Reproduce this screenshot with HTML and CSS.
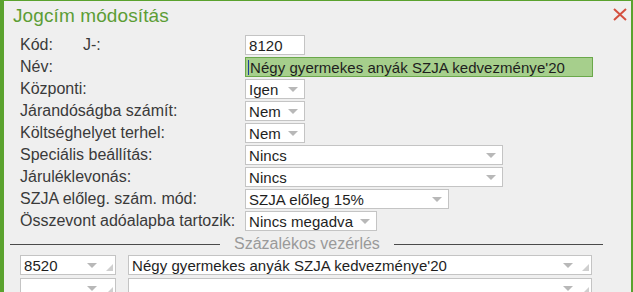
FILE: index.html
```html
<!DOCTYPE html>
<html lang="hu">
<head>
    <meta charset="UTF-8">
    <title>Jogcím módosítás</title>
    <link rel="stylesheet" href="styles.css">
</head>
<body>
    <div class="dialog">
        <div class="dialog-head">
            <h1>Jogcím módosítás</h1>
            <svg class="close" width="14" height="13" viewBox="0 0 14 13">
                <path d="M1 1 L13 12 M13 1 L1 12" stroke="#d4503f" stroke-width="2" fill="none"/>
            </svg>
        </div>

        <div class="form">
            <div class="label"><span class="kod">Kód:</span><span>J-:</span></div>
            <div class="field w60">8120</div>

            <div class="label">Név:</div>
            <div class="field name w348"><span class="caret"></span>Négy gyermekes anyák SZJA kedvezménye'20</div>

            <div class="label">Központi:</div>
            <div class="field select w60">Igen</div>

            <div class="label">Járandóságba számít:</div>
            <div class="field select w60">Nem</div>

            <div class="label">Költséghelyet terhel:</div>
            <div class="field select w60">Nem</div>

            <div class="label">Speciális beállítás:</div>
            <div class="field select w258">Nincs</div>

            <div class="label">Járuléklevonás:</div>
            <div class="field select w258">Nincs</div>

            <div class="label">SZJA előleg. szám. mód:</div>
            <div class="field select w204">SZJA előleg 15%</div>

            <div class="label">Összevont adóalapba tartozik:</div>
            <div class="field select w132">Nincs megadva</div>
        </div>

        <div class="divider">Százalékos vezérlés</div>

        <div class="rule-rows">
            <div class="field select grip">8520</div>
            <div class="field select grip">Négy gyermekes anyák SZJA kedvezménye'20</div>
            <div class="field select grip"></div>
            <div class="field select grip"></div>
        </div>
    </div>
</body>
</html>
```

FILE: styles.css
```css
html, body {
    margin: 0;
    height: 100%;
    overflow: hidden;
}

body {
    font-family: "Liberation Sans", Arial, sans-serif;
    background: #efefef;
}

.dialog {
    height: 292px;
    box-sizing: border-box;
    border-left: 4px solid #5aa22e;
    border-top: 1px solid #5aa22e;
    border-right: 2px solid #5aa22e;
    background: #efefef;
}

.dialog-head {
    display: flex;
    justify-content: space-between;
    align-items: flex-start;
    height: 34px;
    padding: 0 4px 0 9px;
}

h1 {
    margin: 4px 0 0;
    font-size: 19px;
    font-weight: normal;
    color: #5c9d35;
    letter-spacing: 0.1px;
}

.close {
    margin-top: 7px;
}

.form {
    display: grid;
    grid-template-columns: 225px 1fr;
    grid-auto-rows: 20px;
    row-gap: 2px;
    padding-left: 16px;
}

.label {
    display: flex;
    align-items: center;
    font-size: 16px;
    color: #3a3a3a;
}

.kod {
    width: 63px;
}

.field {
    position: relative;
    display: flex;
    align-items: center;
    box-sizing: border-box;
    height: 20px;
    padding-left: 3px;
    border: 1px solid #c4c4c4;
    background: #fff;
    font-size: 15px;
    letter-spacing: 0.05px;
    color: #1e1e1e;
    white-space: nowrap;
}

.select::after {
    content: "";
    position: absolute;
    right: 6px;
    top: 7px;
    border-left: 5px solid transparent;
    border-right: 5px solid transparent;
    border-top: 5px solid #b8b8b8;
}

.w60 { width: 60px; }
.w132 { width: 132px; }
.w204 { width: 204px; }
.w258 { width: 258px; }
.w348 { width: 348px; }

.name {
    background: #a6cf8c;
    border-color: #6aa84a;
    padding-left: 2px;
}

.caret {
    width: 1px;
    height: 15px;
    margin-right: 1px;
    background: #1c3fa0;
}

.divider {
    display: flex;
    align-items: center;
    gap: 14px;
    margin: 3px 28px 0 6px;
    height: 20px;
    font-size: 16px;
    color: #9a9a9a;
}

.divider::before,
.divider::after {
    content: "";
    flex: 1;
    border-top: 1px solid #4a4a4a;
}

.divider::before {
    flex: 0 0 210px;
}

.rule-rows {
    display: grid;
    grid-template-columns: 96px 464px;
    column-gap: 12px;
    row-gap: 3px;
    margin: 1px 0 0 16px;
}

.grip::after {
    right: 18px;
}

.grip::before {
    content: "";
    position: absolute;
    right: 2px;
    bottom: 3px;
    border-left: 7px solid transparent;
    border-bottom: 7px solid #cfcfcf;
}
```
